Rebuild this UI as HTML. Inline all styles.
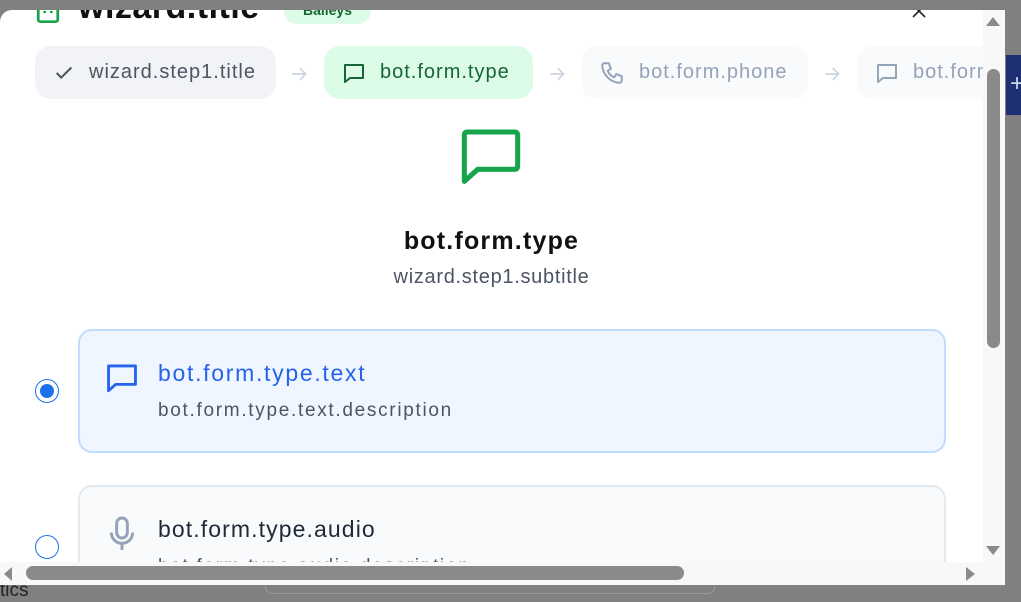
<!DOCTYPE html>
<html><head><style>
*{box-sizing:border-box;margin:0;padding:0}
body{width:1021px;height:599px;background:#808080;position:relative;overflow:hidden;font-family:"Liberation Sans",sans-serif}
.modal{position:absolute;left:0;top:10px;width:1005px;height:575px;background:#fff;border-radius:12px 0 0 0;overflow:hidden}
.abs{position:absolute;white-space:nowrap}
.pill{position:absolute;top:36px;height:53px;border-radius:16px;display:flex;align-items:center;font-size:20px;letter-spacing:1px;padding-left:18px;white-space:nowrap;overflow:hidden}
.pill svg{margin-right:14px;flex:none}
.arrow{position:absolute;top:54px}
</style></head><body>
<div class="abs" style="left:1006px;top:55px;width:15px;height:60px;background:#1e2f73"></div>
<div class="abs" style="left:1010px;top:70px;color:#cfd6ea;font-size:24px">+</div>
<div class="abs" style="left:0;top:580px;font-size:19px;color:#222">tics</div>
<div class="abs" style="left:265px;top:580px;width:450px;height:14px;border:1px solid #999;border-radius:8px"></div>
<div class="modal">
 <svg class="abs" style="left:35px;top:-10px" width="26" height="26" viewBox="0 0 24 24" fill="none" stroke="#16a34a" stroke-width="2.5"><rect x="3" y="4" width="18" height="16" rx="2"/><path d="M9 10v2M15 10v2"/></svg>
 <div class="abs" style="left:78px;top:-22px;font-size:34px;font-weight:bold;color:#111;letter-spacing:0.5px">wizard.title</div>
 <div class="abs" style="left:284px;top:-12px;width:87px;height:26px;border-radius:13px;background:#dcfce7;color:#166534;font-size:14px;font-weight:bold;text-align:center;padding-top:4px">Baileys</div>
 <svg class="abs" style="left:910px;top:-8px" width="18" height="18" viewBox="0 0 18 18" stroke="#222" stroke-width="1.6"><path d="M3 3l12 12M15 3L3 15"/></svg>

 <div class="pill" style="left:35px;width:241px;background:#f1f3f6;color:#4b5563"><svg width="22" height="22" viewBox="0 0 24 24" fill="none" stroke="#4b5563" stroke-width="2.2"><path d="M4 12l5 5L20 6"/></svg>wizard.step1.title</div>
 <svg class="arrow" style="left:289px" width="20" height="20" viewBox="0 0 24 24" fill="none" stroke="#cbd5e1" stroke-width="2"><path d="M4 12h16M13 5l7 7-7 7"/></svg>
 <div class="pill" style="left:324px;width:209px;background:#dcfce7;color:#166534"><svg width="24" height="24" viewBox="0 0 24 24" fill="none" stroke="#166534" stroke-width="2"><path d="M3 4h18v13H8l-5 4z" stroke-linejoin="round"/></svg>bot.form.type</div>
 <svg class="arrow" style="left:547px" width="20" height="20" viewBox="0 0 24 24" fill="none" stroke="#cbd5e1" stroke-width="2"><path d="M4 12h16M13 5l7 7-7 7"/></svg>
 <div class="pill" style="left:581px;width:227px;background:#f8fafc;color:#94a3b8"><svg width="26" height="26" viewBox="0 0 24 24" fill="none" stroke="#94a3b8" stroke-width="1.8"><path d="M5 3h4l2 5-3 2a11 11 0 0 0 6 6l2-3 5 2v4a2 2 0 0 1-2 2A17 17 0 0 1 3 5a2 2 0 0 1 2-2z"/></svg>bot.form.phone</div>
 <svg class="arrow" style="left:822px" width="20" height="20" viewBox="0 0 24 24" fill="none" stroke="#cbd5e1" stroke-width="2"><path d="M4 12h16M13 5l7 7-7 7"/></svg>
 <div class="pill" style="left:857px;width:200px;background:#f8fafc;color:#94a3b8"><svg width="24" height="24" viewBox="0 0 24 24" fill="none" stroke="#94a3b8" stroke-width="2"><path d="M3 4h18v13H8l-5 4z" stroke-linejoin="round"/></svg>bot.form.type</div>

 <svg class="abs" style="left:459px;top:118px" width="64" height="64" viewBox="0 0 24 24" fill="none" stroke="#16a34a" stroke-width="1.9"><path d="M2 2.5a1 1 0 0 1 1-1h18a1 1 0 0 1 1 1v12a1 1 0 0 1-1 1H7l-5 4.5z" stroke-linejoin="round"/></svg>
 <div class="abs" style="left:0;width:983px;top:217px;text-align:center;font-size:25px;font-weight:bold;color:#111;letter-spacing:1.2px">bot.form.type</div>
 <div class="abs" style="left:0;width:983px;top:256px;text-align:center;font-size:20px;color:#4b5563;letter-spacing:0.7px">wizard.step1.subtitle</div>

 <div class="abs" style="left:35px;top:369px;width:24px;height:24px;border-radius:50%;border:1.5px solid #1a73e8;background:#fff"><div style="margin:3.5px;width:14px;height:14px;border-radius:50%;background:#1a73e8"></div></div>
 <div class="abs" style="left:78px;top:319px;width:868px;height:124px;border:2px solid #bfdbfe;border-radius:14px;background:#eff6ff"></div>
 <svg class="abs" style="left:105px;top:351px" width="34" height="34" viewBox="0 0 24 24" fill="none" stroke="#2563eb" stroke-width="2"><path d="M2.5 3.5h19v13H7.5l-5 4.5z" stroke-linejoin="round"/></svg>
 <div class="abs" style="left:158px;top:350px;font-size:23px;color:#2563eb;letter-spacing:1.7px">bot.form.type.text</div>
 <div class="abs" style="left:158px;top:390px;font-size:19px;color:#4b5563;letter-spacing:1.7px">bot.form.type.text.description</div>

 <div class="abs" style="left:35px;top:525px;width:24px;height:24px;border-radius:50%;border:1.5px solid #1a73e8;background:#fff"></div>
 <div class="abs" style="left:78px;top:475px;width:868px;height:124px;border:2px solid #e2e8f0;border-radius:14px;background:#f8fafc"></div>
 <svg class="abs" style="left:106px;top:506px" width="32" height="36" viewBox="0 0 24 26" fill="none" stroke="#94a3b8" stroke-width="2.2"><rect x="8" y="1" width="8" height="15" rx="4"/><path d="M4 12a8 8 0 0 0 16 0M12 20v5"/></svg>
 <div class="abs" style="left:158px;top:506px;font-size:23px;color:#1f2937;letter-spacing:1.1px">bot.form.type.audio</div>
 <div class="abs" style="left:158px;top:546px;font-size:19px;color:#4b5563;letter-spacing:1.7px">bot.form.type.audio.description</div>

 <div class="abs" style="left:983px;top:0;width:22px;height:552px;background:#f8f8f8"></div>
 <div class="abs" style="left:986px;top:7px;width:0;height:0;border-left:7px solid transparent;border-right:7px solid transparent;border-bottom:9px solid #8a8a8a"></div>
 <div class="abs" style="left:987px;top:59px;width:13px;height:279px;border-radius:7px;background:#8a8a8a"></div>
 <div class="abs" style="left:986px;top:536px;width:0;height:0;border-left:7px solid transparent;border-right:7px solid transparent;border-top:9px solid #8a8a8a"></div>
 <div class="abs" style="left:0;top:552px;width:1005px;height:23px;background:#f8f8f8"></div>
 <div class="abs" style="left:4px;top:557px;width:0;height:0;border-top:7px solid transparent;border-bottom:7px solid transparent;border-right:8px solid #8a8a8a"></div>
 <div class="abs" style="left:26px;top:556px;width:658px;height:14px;border-radius:7px;background:#8a8a8a"></div>
 <div class="abs" style="left:966px;top:557px;width:0;height:0;border-top:7px solid transparent;border-bottom:7px solid transparent;border-left:9px solid #8a8a8a"></div>
</div>
</body></html>
